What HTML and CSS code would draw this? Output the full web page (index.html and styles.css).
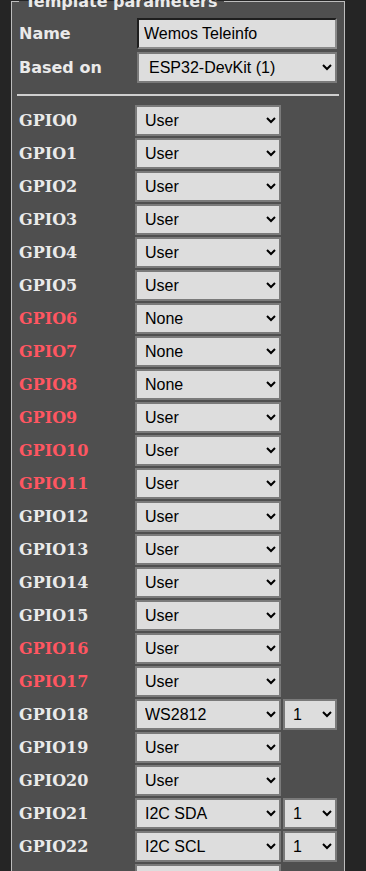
FILE: index.html
```html
<!DOCTYPE html>
<html>
<head>
<meta charset="utf-8">
<link rel="stylesheet" href="styles.css">
</head>
<body>
<fieldset class="panel">
  <legend class="panel-title">Template parameters</legend>
  <div class="head-row">
    <span class="head-label">Name</span>
    <input class="name-input" type="text" value="Wemos Teleinfo">
  </div>
  <div class="head-row">
    <span class="head-label">Based on</span>
    <select class="base-select"><option>ESP32-DevKit (1)</option></select>
  </div>
  <hr class="divider">
  <div class="gpio-list">
    <div class="gpio-row"><span class="gpio-label">GPIO0</span><select class="fn"><option>User</option></select></div>
    <div class="gpio-row"><span class="gpio-label">GPIO1</span><select class="fn"><option>User</option></select></div>
    <div class="gpio-row"><span class="gpio-label">GPIO2</span><select class="fn"><option>User</option></select></div>
    <div class="gpio-row"><span class="gpio-label">GPIO3</span><select class="fn"><option>User</option></select></div>
    <div class="gpio-row"><span class="gpio-label">GPIO4</span><select class="fn"><option>User</option></select></div>
    <div class="gpio-row"><span class="gpio-label">GPIO5</span><select class="fn"><option>User</option></select></div>
    <div class="gpio-row"><span class="gpio-label warn">GPIO6</span><select class="fn"><option>None</option></select></div>
    <div class="gpio-row"><span class="gpio-label warn">GPIO7</span><select class="fn"><option>None</option></select></div>
    <div class="gpio-row"><span class="gpio-label warn">GPIO8</span><select class="fn"><option>None</option></select></div>
    <div class="gpio-row"><span class="gpio-label warn">GPIO9</span><select class="fn"><option>User</option></select></div>
    <div class="gpio-row"><span class="gpio-label warn">GPIO10</span><select class="fn"><option>User</option></select></div>
    <div class="gpio-row"><span class="gpio-label warn">GPIO11</span><select class="fn"><option>User</option></select></div>
    <div class="gpio-row"><span class="gpio-label">GPIO12</span><select class="fn"><option>User</option></select></div>
    <div class="gpio-row"><span class="gpio-label">GPIO13</span><select class="fn"><option>User</option></select></div>
    <div class="gpio-row"><span class="gpio-label">GPIO14</span><select class="fn"><option>User</option></select></div>
    <div class="gpio-row"><span class="gpio-label">GPIO15</span><select class="fn"><option>User</option></select></div>
    <div class="gpio-row"><span class="gpio-label warn">GPIO16</span><select class="fn"><option>User</option></select></div>
    <div class="gpio-row"><span class="gpio-label warn">GPIO17</span><select class="fn"><option>User</option></select></div>
    <div class="gpio-row"><span class="gpio-label">GPIO18</span><select class="fn"><option>WS2812</option></select><select class="idx"><option>1</option></select></div>
    <div class="gpio-row"><span class="gpio-label">GPIO19</span><select class="fn"><option>User</option></select></div>
    <div class="gpio-row"><span class="gpio-label">GPIO20</span><select class="fn"><option>User</option></select></div>
    <div class="gpio-row"><span class="gpio-label">GPIO21</span><select class="fn"><option>I2C SDA</option></select><select class="idx"><option>1</option></select></div>
    <div class="gpio-row"><span class="gpio-label">GPIO22</span><select class="fn"><option>I2C SCL</option></select><select class="idx"><option>1</option></select></div>
    <div class="gpio-row"><span class="gpio-label">GPIO23</span><select class="fn"><option>User</option></select></div>
  </div>
</fieldset>
</body>
</html>
```
FILE: styles.css
```css
html, body {
  margin: 0;
  padding: 0;
  background: #252525;
  height: 871px;
  overflow: hidden;
}
body {
  color: #eaeaea;
  font-family: "DejaVu Sans", Verdana, sans-serif;
}
.panel {
  box-sizing: border-box;
  width: 334px;
  min-width: 0;
  margin: -8px 0 0 11px;
  padding: 7px 7px 10px 7px;
  border: 1px solid #bdbdbd;
  background: #4f4f4f;
}
.panel-title {
  padding: 0 6px;
  font-weight: bold;
  font-size: 16px;
  line-height: 19px;
  color: #eaeaea;
}
.head-row {
  display: flex;
  align-items: center;
  height: 31px;
  margin-bottom: 3px;
}
.head-label {
  width: 118px;
  flex: none;
  font-weight: bold;
  font-size: 16px;
}
.name-input {
  box-sizing: border-box;
  flex: 1 1 0;
  width: 0;
  min-width: 0;
  height: 31px;
  margin: 0;
  padding: 0 5px;
  background: #dddddd;
  color: #000;
  font-family: "Liberation Sans", Arial, sans-serif;
  font-size: 16px;
  border-style: solid;
  border-width: 2px;
  border-color: #1e1e1e #8a8a8a #8a8a8a #1e1e1e;
  outline: none;
}
select {
  box-sizing: border-box;
  height: 31px;
  margin: 0;
  background-color: #dddddd;
  color: #000;
  font-family: "Liberation Sans", Arial, sans-serif;
  font-size: 16px;
  border: 2px solid #7a7a7a;
  border-radius: 0;
  padding: 0 4px 0 4px;
}
.base-select {
  flex: 1 1 0;
  width: 0;
  min-width: 0;
  padding-left: 6px;
}
.divider {
  height: 0;
  margin: 11px -2px 9px -2px;
  border: none;
  border-top: 2px solid #cfcfcf;
}
.gpio-list {
  display: flex;
  flex-direction: column;
  gap: 2px;
}
.gpio-row {
  display: flex;
  align-items: center;
  height: 31px;
}
.gpio-label {
  width: 116px;
  flex: none;
  font-family: "DejaVu Serif", Georgia, serif;
  font-weight: bold;
  font-size: 16px;
  color: #eaeaea;
}
.gpio-label.warn {
  color: #ff5661;
}
.fn {
  width: 146px;
  flex: none;
}
.idx {
  width: 54px;
  flex: none;
  margin-left: 2px;
}
```
